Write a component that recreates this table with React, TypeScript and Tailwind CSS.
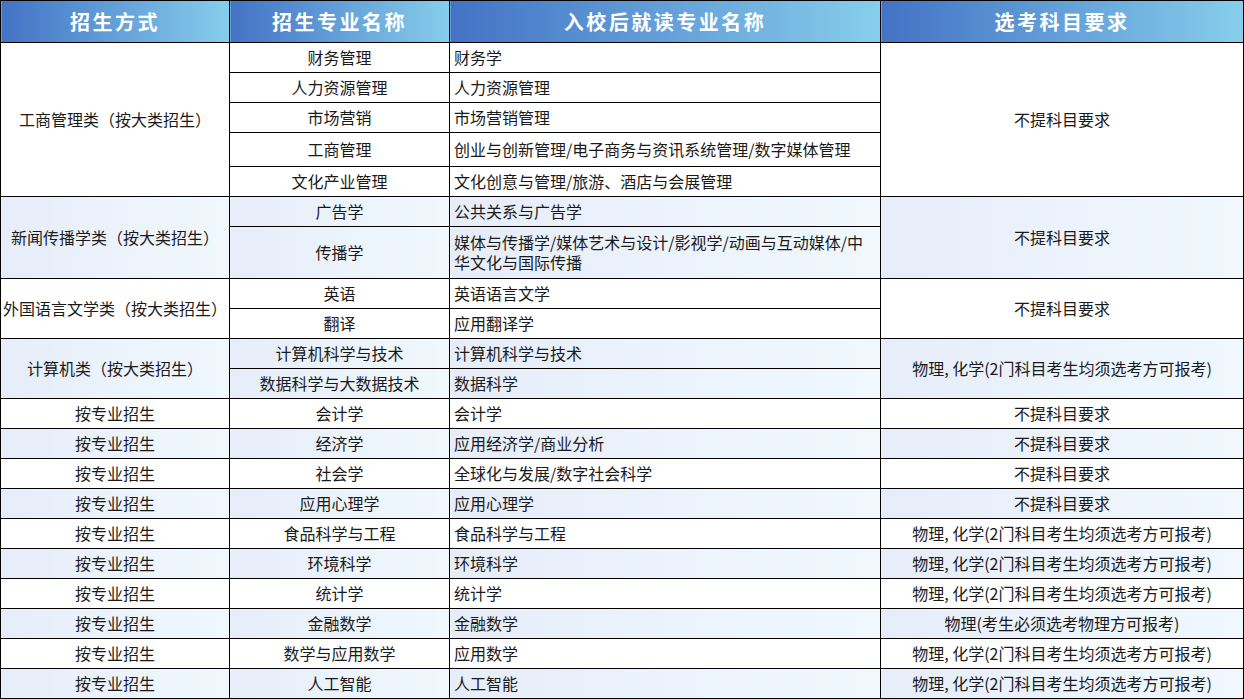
import React from "react";

type Row = { major: string; study: React.ReactNode; h?: string };
type Group = { method: string; blue: boolean; req: string; rows: Row[] };

const NONE = "不提科目要求";
const PC = "物理, 化学(2门科目考生均须选考方可报考)";

const groups: Group[] = [
  {
    method: "工商管理类（按大类招生）",
    blue: false,
    req: NONE,
    rows: [
      { major: "财务管理", study: "财务学" },
      { major: "人力资源管理", study: "人力资源管理" },
      { major: "市场营销", study: "市场营销管理" },
      { major: "工商管理", study: "创业与创新管理/电子商务与资讯系统管理/数字媒体管理", h: "h-[34px]" },
      { major: "文化产业管理", study: "文化创意与管理/旅游、酒店与会展管理" },
    ],
  },
  {
    method: "新闻传播学类（按大类招生）",
    blue: true,
    req: NONE,
    rows: [
      { major: "广告学", study: "公共关系与广告学" },
      {
        major: "传播学",
        study: (
          <>
            媒体与传播学/媒体艺术与设计/影视学/动画与互动媒体/中
            <br />
            华文化与国际传播
          </>
        ),
        h: "h-[52px]",
      },
    ],
  },
  {
    method: "外国语言文学类（按大类招生）",
    blue: false,
    req: NONE,
    rows: [
      { major: "英语", study: "英语语言文学" },
      { major: "翻译", study: "应用翻译学" },
    ],
  },
  {
    method: "计算机类（按大类招生）",
    blue: true,
    req: PC,
    rows: [
      { major: "计算机科学与技术", study: "计算机科学与技术" },
      { major: "数据科学与大数据技术", study: "数据科学" },
    ],
  },
  { method: "按专业招生", blue: false, req: NONE, rows: [{ major: "会计学", study: "会计学" }] },
  { method: "按专业招生", blue: true, req: NONE, rows: [{ major: "经济学", study: "应用经济学/商业分析" }] },
  { method: "按专业招生", blue: false, req: NONE, rows: [{ major: "社会学", study: "全球化与发展/数字社会科学" }] },
  { method: "按专业招生", blue: true, req: NONE, rows: [{ major: "应用心理学", study: "应用心理学" }] },
  { method: "按专业招生", blue: false, req: PC, rows: [{ major: "食品科学与工程", study: "食品科学与工程" }] },
  { method: "按专业招生", blue: true, req: PC, rows: [{ major: "环境科学", study: "环境科学" }] },
  { method: "按专业招生", blue: false, req: PC, rows: [{ major: "统计学", study: "统计学" }] },
  { method: "按专业招生", blue: true, req: "物理(考生必须选考物理方可报考)", rows: [{ major: "金融数学", study: "金融数学" }] },
  { method: "按专业招生", blue: false, req: PC, rows: [{ major: "数学与应用数学", study: "应用数学" }] },
  { method: "按专业招生", blue: true, req: PC, rows: [{ major: "人工智能", study: "人工智能" }] },
];

const headCls =
  "border border-black bg-linear-to-r from-[#4472c4] to-[#87ceeb] text-white font-bold text-[20px] tracking-[2.5px] text-center align-middle p-0";

export default function App() {
  return (
    <div className="w-[1244px] h-[699px] bg-white overflow-hidden" style={{ fontFamily: '"Noto Sans CJK SC", "Noto Sans", sans-serif' }}>
      <table className="table-fixed border-collapse w-[1243px] text-[16px] leading-[20px] text-[#1a1a1a]">
        <colgroup>
          <col className="w-[229px]" />
          <col className="w-[220px]" />
          <col className="w-[431px]" />
          <col className="w-[363px]" />
        </colgroup>
        <thead>
          <tr className="h-[42px]">
            <th className={headCls}>招生方式</th>
            <th className={headCls}>招生专业名称</th>
            <th className={headCls}>入校后就读专业名称</th>
            <th className={headCls}>选考科目要求</th>
          </tr>
        </thead>
        <tbody>
          {groups.map((g, gi) => {
            const bg = g.blue ? "bg-linear-to-r from-[#e6edf9] to-[#f0f8fe]" : "bg-white";
            return g.rows.map((r, ri) => (
              <tr key={`${gi}-${ri}`} className={r.h ?? "h-[30px]"}>
                {ri === 0 && (
                  <td rowSpan={g.rows.length} className={`border border-black ${bg} text-center align-middle px-0 pt-0 pb-[2px] whitespace-nowrap`}>
                    {g.method}
                  </td>
                )}
                <td className={`border border-black ${bg} text-center align-middle px-0 pt-0 pb-[2px] whitespace-nowrap`}>{r.major}</td>
                <td className={`border border-black ${bg} text-left align-middle pt-0 pb-[2px] pl-[4px] pr-0 whitespace-nowrap`}>{r.study}</td>
                {ri === 0 && (
                  <td rowSpan={g.rows.length} className={`border border-black ${bg} text-center align-middle px-0 pt-0 pb-[2px] whitespace-nowrap`}>
                    {g.req}
                  </td>
                )}
              </tr>
            ));
          })}
        </tbody>
      </table>
    </div>
  );
}
